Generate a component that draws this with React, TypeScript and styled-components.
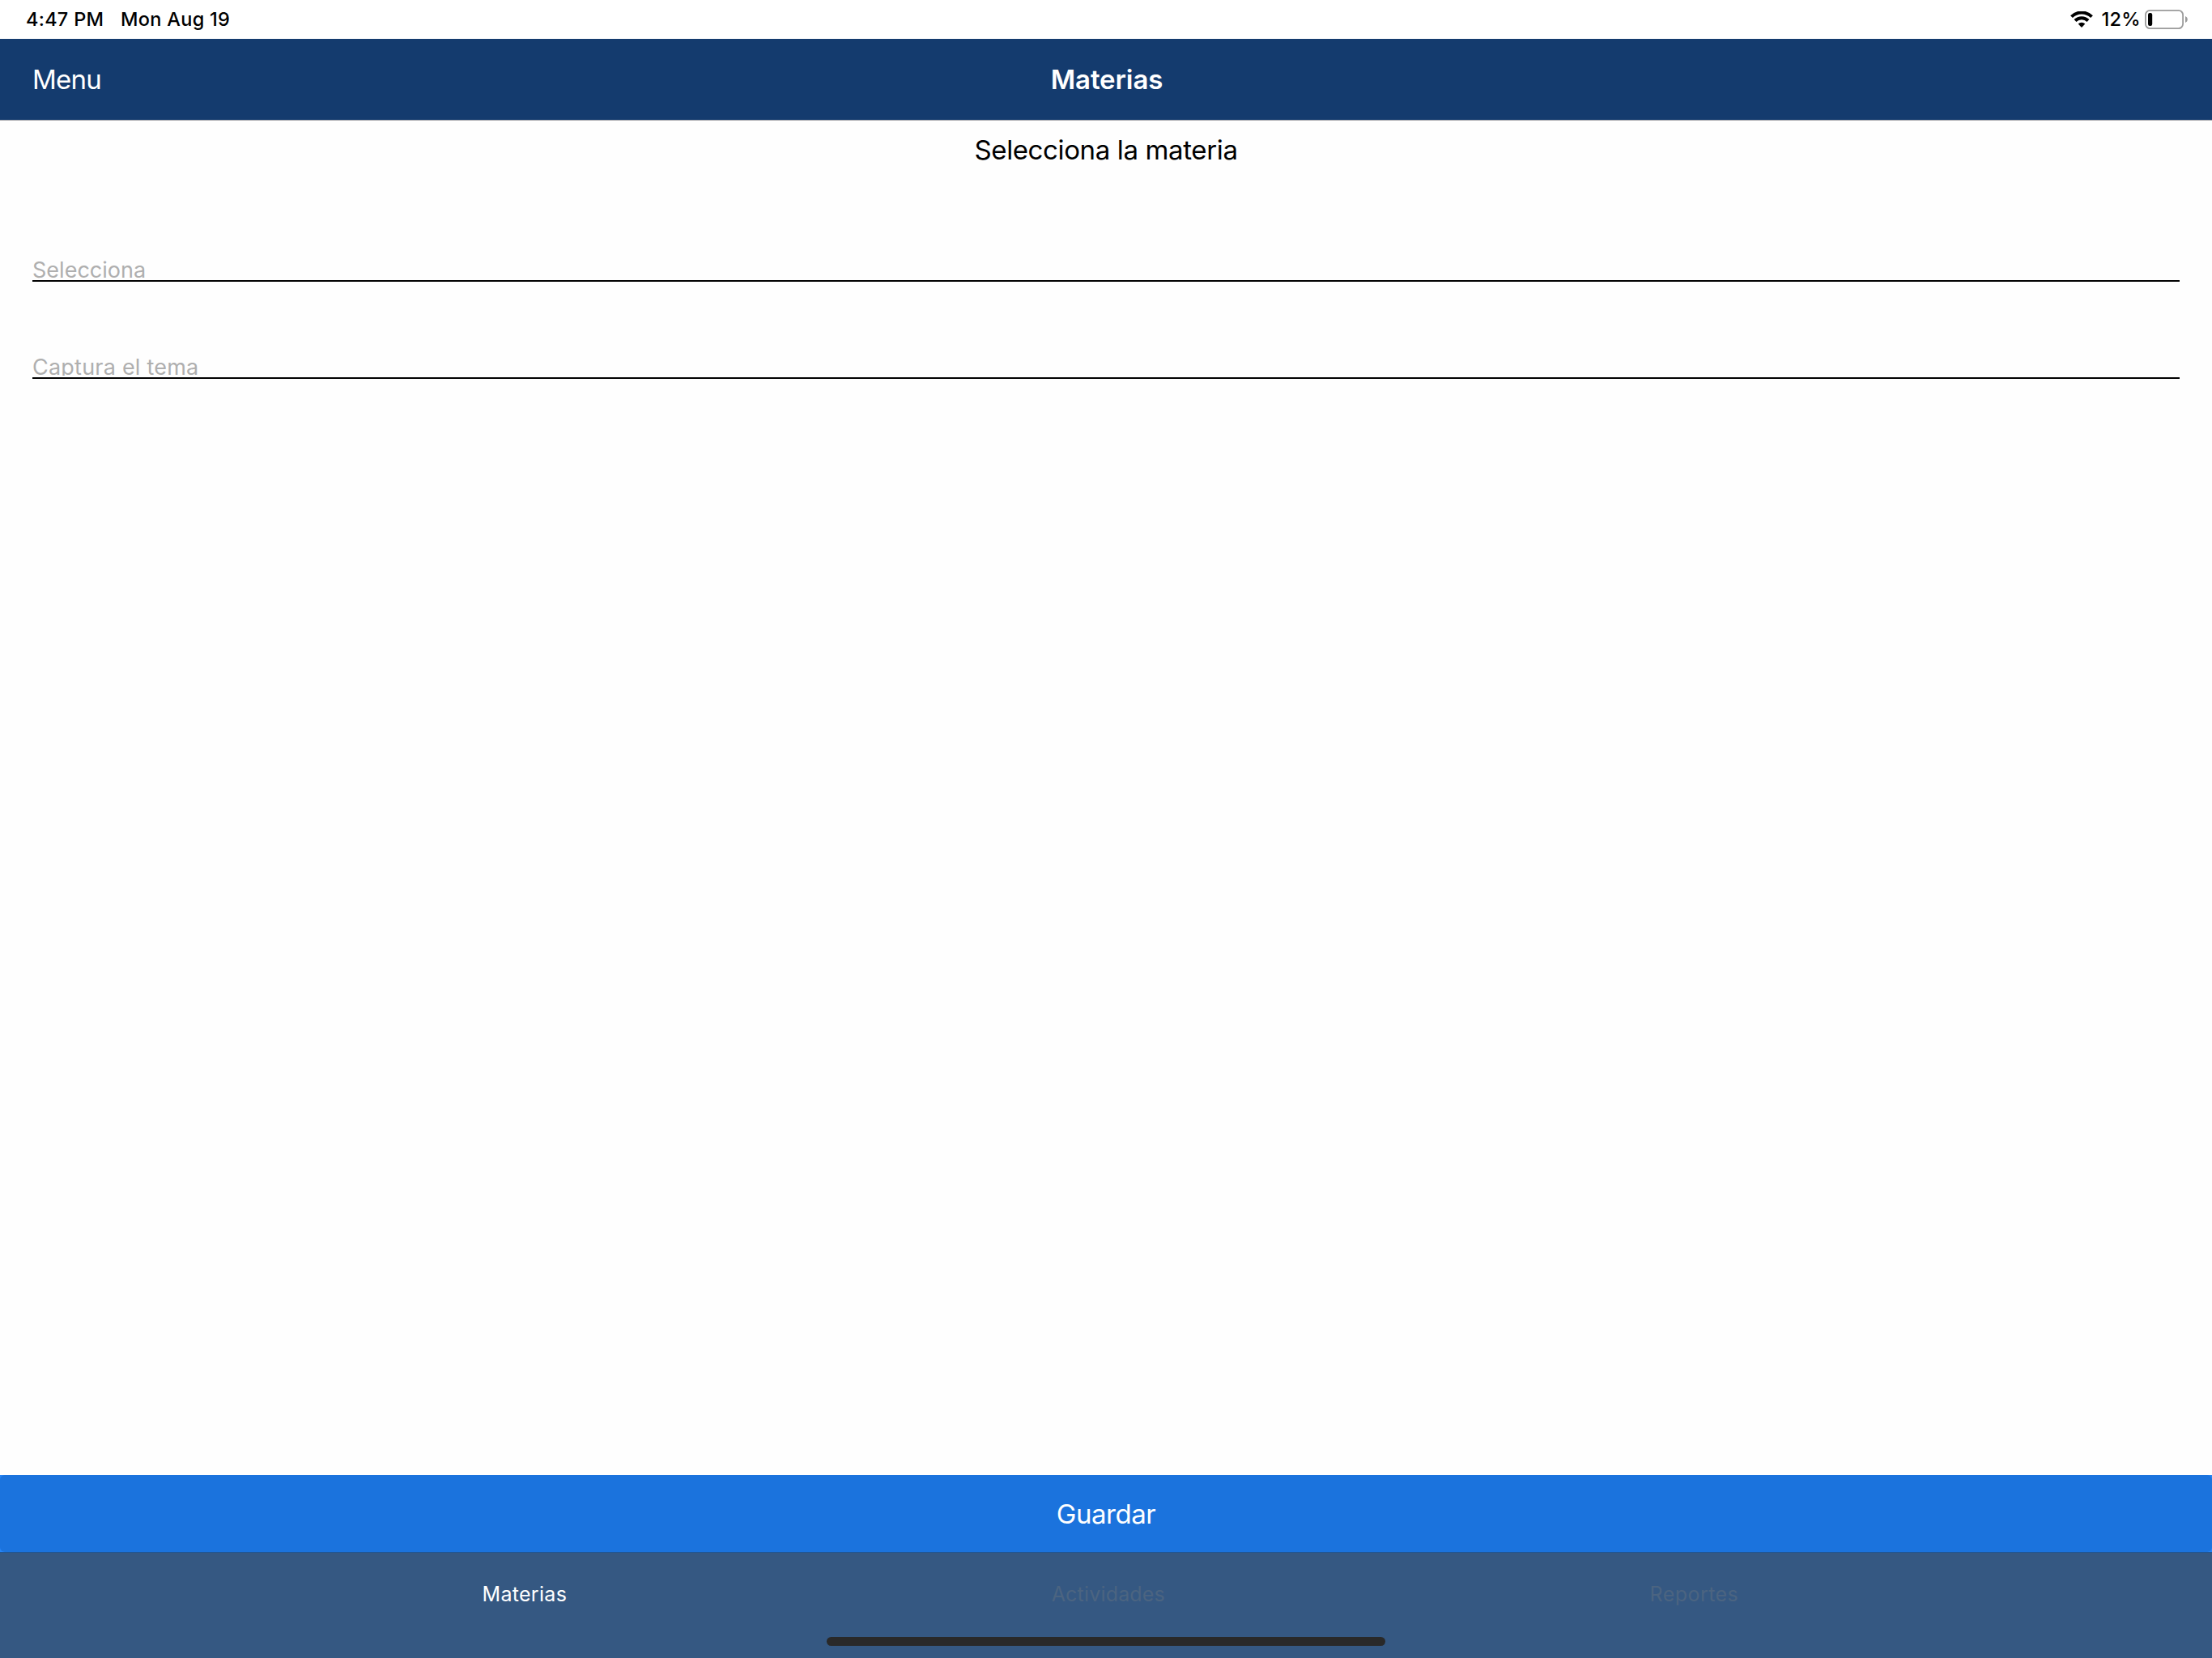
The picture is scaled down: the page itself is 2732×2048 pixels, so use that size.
import React from 'react';
import styled, { createGlobalStyle } from 'styled-components';

const Global = createGlobalStyle`
  *, *::before, *::after { box-sizing: border-box; }
  body { margin: 0; background: #fff; font-family: Inter, "Liberation Sans", sans-serif; color: #000; }
`;

const Screen = styled.div`
  width: 2732px;
  height: 2048px;
  display: flex;
  flex-direction: column;
  background: #fefefe;
  overflow: hidden;
  white-space: nowrap;
`;

const StatusBar = styled.header`
  height: 48px;
  flex: none;
  display: flex;
  align-items: center;
  padding: 0 30px 1px 32px;
  background: #fff;
  font-size: 23.5px;
  font-weight: 500;
  line-height: 30px;
  letter-spacing: 0.3px;
`;

const Clock = styled.span`
  width: 117px;
`;

const StatusIcons = styled.div`
  display: flex;
  align-items: center;
  margin-left: auto;
`;

const Percent = styled.span`
  margin: 0 5px 0 10.5px;
`;

const NavBar = styled.nav`
  height: 101px;
  flex: none;
  display: grid;
  grid-template-columns: 1fr auto 1fr;
  align-items: center;
  padding: 0 40px;
  background: #143b6e;
  border-bottom: 1px solid #a6a6aa;
  color: #fff;
  font-size: 33px;
  line-height: 40px;
`;

const NavButton = styled.button`
  justify-self: start;
  padding: 0;
  border: 0;
  background: none;
  color: inherit;
  font: inherit;
  letter-spacing: -0.75px;
`;

const NavTitle = styled.h1`
  margin: 0 0 0 2px;
  font-size: inherit;
  font-weight: 600;
  letter-spacing: -0.1px;
`;

const Content = styled.main`
  flex: 1;
  display: flex;
  flex-direction: column;
  padding: 16px 40px 0;
`;

const Prompt = styled.h2`
  margin: 0 0 111px;
  font-size: 33px;
  font-weight: 400;
  line-height: 40px;
  letter-spacing: -0.37px;
  text-align: center;
`;

const Field = styled.label`
  display: block;
  height: 32px;
  margin-bottom: 88px;
  border-bottom: 2px solid #000;
`;

const FieldClip = styled.div`
  height: 28px;
  overflow: hidden;
`;

const Input = styled.input<{ $spacing: string }>`
  display: block;
  width: 100%;
  height: 36px;
  padding: 0;
  border: 0;
  outline: 0;
  background: transparent;
  font: 400 27px/36px Inter, "Liberation Sans", sans-serif;
  letter-spacing: ${(p) => p.$spacing};

  &::placeholder {
    color: #afafaf;
    opacity: 1;
  }
`;

const SaveBar = styled.div`
  height: 95px;
  flex: none;
  background: #2684f5;
`;

const SaveButton = styled.button`
  display: flex;
  align-items: center;
  justify-content: center;
  width: 100%;
  height: 100%;
  padding: 1px 0 0;
  border: 0;
  border-radius: 6px;
  background: #1b73dd;
  color: #fff;
  font: 400 33px/40px Inter, "Liberation Sans", sans-serif;
  letter-spacing: -0.48px;
`;

const TabBar = styled.footer`
  height: 131px;
  flex: none;
  display: flex;
  flex-direction: column;
  justify-content: space-between;
  border-top: 1px solid #1f5694;
  background: #355882;
`;

const Tabs = styled.div`
  display: flex;
  gap: 598.5px;
  padding: 36px 0 0 595.5px;
`;

const Tab = styled.button<{ $active?: boolean; $spacing: string }>`
  padding: 0;
  border: 0;
  background: none;
  color: ${(p) => (p.$active ? '#fff' : '#4b6481')};
  font: 400 25px/30px Inter, "Liberation Sans", sans-serif;
  letter-spacing: ${(p) => p.$spacing};
`;

const HomeIndicator = styled.div`
  width: 690px;
  height: 11px;
  margin: 0 auto 15px;
  border-radius: 5.5px;
  background: #292929;
`;

const WifiIcon = () => (
  <svg width="28" height="20" viewBox="0 0 28 20">
    <g fill="none" stroke="#000" strokeWidth="4">
      <path d="M1.5 6.6a17.8 17.8 0 0 1 25 0" />
      <path d="M6 11.5a11.3 11.3 0 0 1 16 0" />
    </g>
    <path d="M14 19.9l-4.3-4.3a6 6 0 0 1 8.6 0z" />
  </svg>
);

const BatteryIcon = () => (
  <svg width="53" height="24" viewBox="0 0 53 24">
    <rect x="0.9" y="0.9" width="46.2" height="22.2" rx="5.5" fill="none" stroke="#9b9b9b" strokeWidth="1.8" />
    <rect x="4" y="4" width="5.2" height="16" rx="2.2" />
    <path d="M50 8c1.7.7 2.8 2.2 2.8 4S51.7 15.3 50 16z" fill="#9b9b9b" />
  </svg>
);

export default function App() {
  return (
    <>
      <Global />
      <Screen>
        <StatusBar>
          <Clock>4:47 PM</Clock>
          <span>Mon Aug 19</span>
          <StatusIcons>
            <WifiIcon />
            <Percent>12%</Percent>
            <BatteryIcon />
          </StatusIcons>
        </StatusBar>
        <NavBar>
          <NavButton>Menu</NavButton>
          <NavTitle>Materias</NavTitle>
        </NavBar>
        <Content>
          <Prompt>Selecciona la materia</Prompt>
          <Field>
            <FieldClip>
              <Input placeholder="Selecciona" $spacing="0.02px" />
            </FieldClip>
          </Field>
          <Field>
            <FieldClip>
              <Input placeholder="Captura el tema" $spacing="0.22px" />
            </FieldClip>
          </Field>
        </Content>
        <SaveBar>
          <SaveButton>Guardar</SaveButton>
        </SaveBar>
        <TabBar>
          <Tabs>
            <Tab $active $spacing="0.3px">Materias</Tab>
            <Tab $spacing="0.19px">Actividades</Tab>
            <Tab $spacing="0.45px">Reportes</Tab>
          </Tabs>
          <HomeIndicator />
        </TabBar>
      </Screen>
    </>
  );
}
